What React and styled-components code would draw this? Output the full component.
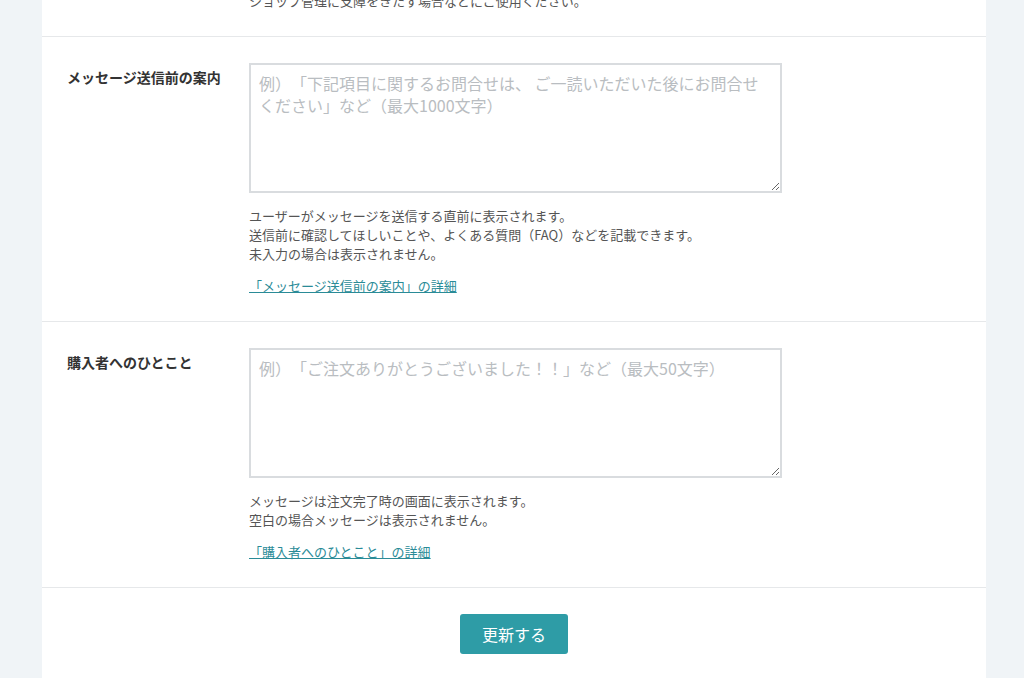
import React from "react";
import styled, { createGlobalStyle } from "styled-components";

const GlobalStyle = createGlobalStyle`
  html, body {
    margin: 0;
    padding: 0;
    background: #f0f4f7;
    font-family: "Noto Sans CJK JP", "Noto Sans", sans-serif;
    text-spacing-trim: space-all;
    overflow: hidden;
  }
`;

const Card = styled.div`
  width: 944px;
  margin-left: 42px;
  margin-top: -9px;
  background: #fff;
  min-height: 700px;
`;

const Section = styled.div`
  display: flex;
  padding: ${(p) => (p.$partial ? "0" : "26px")} 25px 26px 25px;
  border-bottom: 1px solid #e6e8ea;
`;

const Label = styled.div`
  width: 182px;
  flex-shrink: 0;
  padding-top: 4px;
  font-size: 14px;
  line-height: 20px;
  font-weight: bold;
  color: #333;
`;

const Field = styled.div`
  display: flex;
  flex-direction: column;
  align-items: flex-start;
`;

const TextArea = styled.textarea`
  box-sizing: border-box;
  width: 533px;
  height: 130px;
  margin: 0;
  padding: 7px 8px;
  border: 2px solid #d9dcdf;
  border-radius: 0;
  font-family: inherit;
  font-size: 16px;
  line-height: 22px;
  color: #333;
  outline: none;
  text-spacing-trim: space-all;

  &::placeholder {
    color: #b9bdc1;
  }
`;

const Help = styled.p`
  margin: ${(p) => (p.$first ? "0" : "13px")} 0 0;
  font-size: 13px;
  line-height: 19px;
  color: #555;
`;

const Link = styled.a`
  margin-top: 13px;
  font-size: 13px;
  line-height: 19px;
  color: #2a8b97;
  text-decoration: underline;
  cursor: pointer;
`;

const Footer = styled.div`
  display: flex;
  justify-content: center;
  padding: 26px 0;
`;

const Button = styled.button`
  width: 108px;
  height: 40px;
  border: none;
  border-radius: 3px;
  background: #2e9ca6;
  color: #fff;
  font-family: inherit;
  font-size: 16px;
  cursor: pointer;
`;

const Spacer = styled.div`
  width: 182px;
  flex-shrink: 0;
`;

export default function App() {
  return (
    <>
      <GlobalStyle />
      <Card>
        <Section $partial>
          <Spacer />
          <Field>
            <Help $first>ショップ管理に支障をきたす場合などにご使用ください。</Help>
          </Field>
        </Section>

        <Section>
          <Label>メッセージ送信前の案内</Label>
          <Field>
            <TextArea placeholder="例）「下記項目に関するお問合せは、 ご一読いただいた後にお問合せください」など（最大1000文字）" />
            <Help>
              ユーザーがメッセージを送信する直前に表示されます。
              <br />
              送信前に確認してほしいことや、よくある質問（FAQ）などを記載できます。
              <br />
              未入力の場合は表示されません。
            </Help>
            <Link>「メッセージ送信前の案内」の詳細</Link>
          </Field>
        </Section>

        <Section>
          <Label>購入者へのひとこと</Label>
          <Field>
            <TextArea placeholder="例）「ご注文ありがとうございました！！」など（最大50文字）" />
            <Help>
              メッセージは注文完了時の画面に表示されます。
              <br />
              空白の場合メッセージは表示されません。
            </Help>
            <Link>「購入者へのひとこと」の詳細</Link>
          </Field>
        </Section>

        <Footer>
          <Button>更新する</Button>
        </Footer>
      </Card>
    </>
  );
}
